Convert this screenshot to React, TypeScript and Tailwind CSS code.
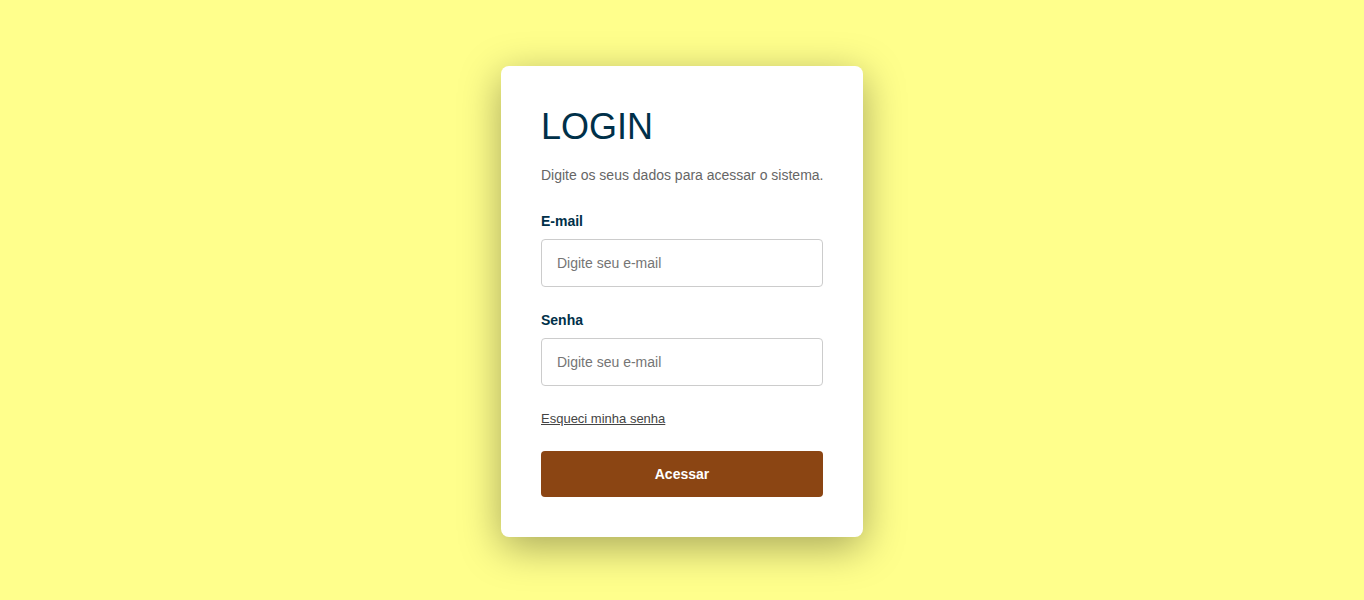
import React from "react";

export default function App() {
  return (
    <div
      className="min-h-screen w-full flex items-center justify-center bg-[#ffff8c]"
      style={{ fontFamily: '"Liberation Sans", Arial, sans-serif' }}
    >
      <div className="w-[362px] bg-white rounded-[8px] px-[40px] pt-[40px] pb-[40px] shadow-[0_10px_40px_rgba(0,0,0,0.35)] mt-[3px]">
        <h1 className="text-[36px] leading-[41px] font-normal text-[#003049] m-0">LOGIN</h1>
        <p className="mt-[20px] text-[14px] leading-[16px] text-[#666666] whitespace-nowrap">
          Digite os seus dados para acessar o sistema.
        </p>
        <label className="block mt-[30px] text-[14px] leading-[16px] font-bold text-[#003049]">E-mail</label>
        <input
          type="email"
          placeholder="Digite seu e-mail"
          className="block mt-[10px] w-full h-[48px] border border-[#cccccc] rounded-[4px] px-[15px] text-[14px] text-[#333] placeholder:text-[#757575] outline-none"
        />
        <label className="block mt-[25px] text-[14px] leading-[16px] font-bold text-[#003049]">Senha</label>
        <input
          type="password"
          placeholder="Digite seu e-mail"
          className="block mt-[10px] w-full h-[48px] border border-[#cccccc] rounded-[4px] px-[15px] text-[14px] text-[#333] placeholder:text-[#757575] outline-none"
        />
        <a href="#" className="block w-fit mt-[25px] text-[13px] leading-[15px] text-[#444444] underline">
          Esqueci minha senha
        </a>
        <button className="block mt-[25px] w-full h-[46px] rounded-[4px] bg-[#8b4513] text-white text-[14px] font-bold">
          Acessar
        </button>
      </div>
    </div>
  );
}
